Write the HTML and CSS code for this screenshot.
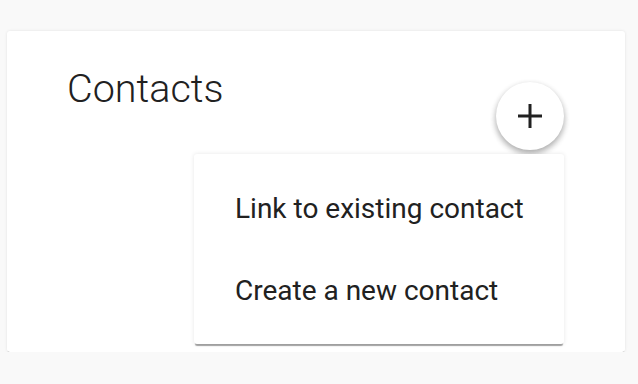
FILE: index.html
```html
<!DOCTYPE html>
<html>
<head>
<meta charset="utf-8">
<link rel="stylesheet" href="styles.css">
</head>
<body>
<div class="card">
  <h1 class="title">Contacts</h1>
  <button class="fab" aria-label="Add">
    <svg width="24" height="24" viewBox="0 0 24 24"><path d="M10.5 0h3v10.5H24v3H13.5V24h-3V13.5H0v-3h10.5z" fill="#212121"/></svg>
  </button>
  <ul class="menu">
    <li class="item">Link to existing contact</li>
    <li class="item">Create a new contact</li>
  </ul>
</div>
</body>
</html>
```
FILE: styles.css
```css
html, body {
  margin: 0;
  padding: 0;
  background: #f9f9f9;
  font-family: Roboto, "Liberation Sans", sans-serif;
  color: #212121;
}
.card {
  position: relative;
  margin: 31px 13px 0 7px;
  height: 321px;
  background: #fff;
  border-radius: 3px;
  box-shadow: 0 0 3px rgba(0,0,0,0.1), 0 3px 1px -1px rgba(0,0,0,0.35);
  padding: 0 0 0 60px;
  box-sizing: border-box;
}
.title {
  margin: 0;
  padding-top: 35px;
  font-size: 39.5px;
  font-weight: 300;
  line-height: 46px;
}
.fab {
  position: absolute;
  left: 489px;
  top: 51px;
  width: 68px;
  height: 68px;
  border: 0;
  border-radius: 50%;
  background: #fff;
  padding: 0;
  display: flex;
  align-items: center;
  justify-content: center;
  box-shadow: 0 3px 6px rgba(0,0,0,0.22), 0 3px 6px rgba(0,0,0,0.16);
}
.menu {
  position: absolute;
  left: 187px;
  top: 123px;
  width: 370px;
  margin: 0;
  padding: 13px 0;
  list-style: none;
  background: #fff;
  border-radius: 3px;
  box-shadow: 0 0 4px rgba(0,0,0,0.1), 0 3px 1px -1px rgba(0,0,0,0.35);
}
.item {
  height: 82px;
  display: flex;
  align-items: center;
  padding-left: 41px;
  font-size: 28px;
  font-weight: 400;
}
```
